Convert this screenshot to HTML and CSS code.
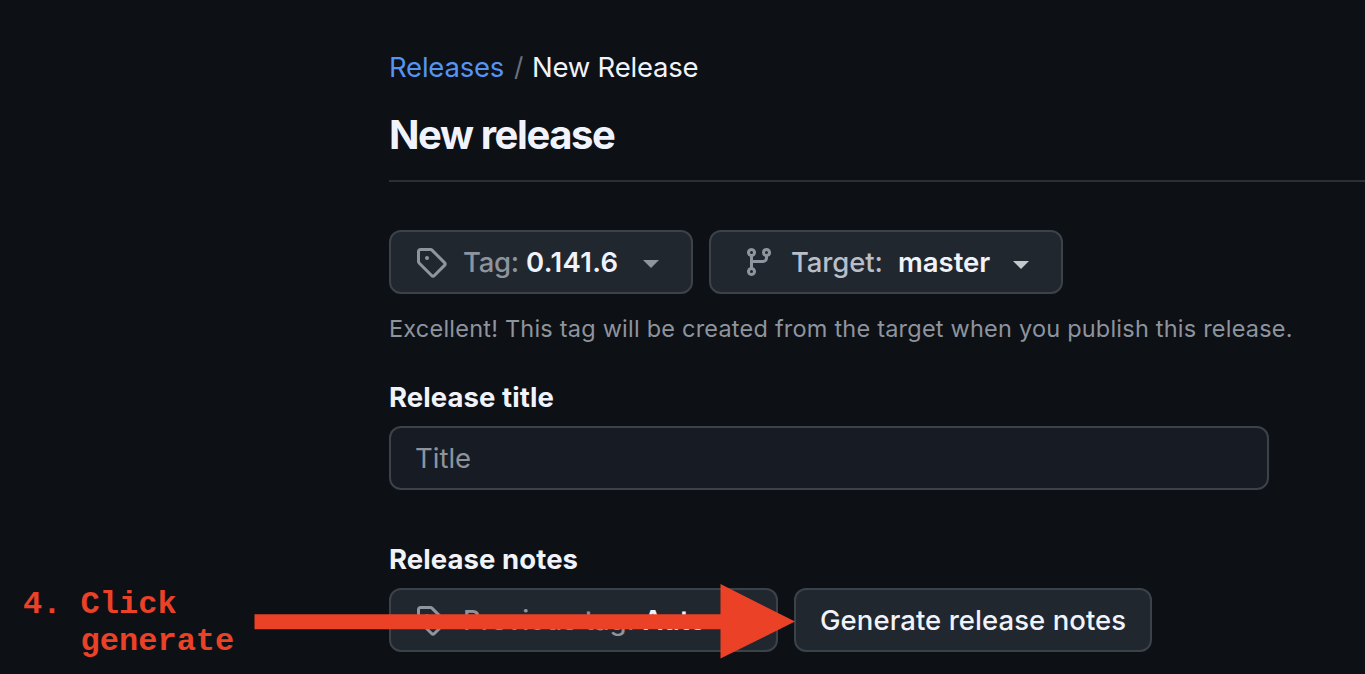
FILE: index.html
```html
<!DOCTYPE html>
<html lang="en">
<head>
<meta charset="utf-8">
<title>New Release</title>
<link rel="stylesheet" href="styles.css">
</head>
<body>
<svg class="symbols" aria-hidden="true">
  <symbol id="tag" viewBox="0 0 16 16"><path d="M1 7.775V2.75C1 1.784 1.784 1 2.75 1h5.025c.464 0 .91.184 1.238.513l6.25 6.25a1.75 1.75 0 0 1 0 2.474l-5.026 5.026a1.75 1.75 0 0 1-2.474 0l-6.25-6.25A1.752 1.752 0 0 1 1 7.775Zm1.5 0c0 .066.026.13.073.177l6.25 6.25a.25.25 0 0 0 .354 0l5.025-5.025a.25.25 0 0 0 0-.354l-6.25-6.25a.25.25 0 0 0-.177-.073H2.75a.25.25 0 0 0-.25.25ZM6 5a1 1 0 1 1 0 2 1 1 0 0 1 0-2Z"/></symbol>
  <symbol id="branch" viewBox="0 0 16 16"><path fill-rule="evenodd" d="M11.75 2.5a.75.75 0 1 0 0 1.5.75.75 0 0 0 0-1.5Zm-2.25.75a2.25 2.25 0 1 1 3 2.122V6A2.5 2.5 0 0 1 10 8.5H5v2.128a2.251 2.251 0 1 1-1.5 0V5.372a2.25 2.25 0 1 1 1.5 0V7h5a1 1 0 0 0 1-1v-.628A2.25 2.25 0 0 1 9.5 3.25ZM4.25 12a.75.75 0 1 0 0 1.5.75.75 0 0 0 0-1.5ZM3.5 3.25a.75.75 0 1 0 1.5 0 .75.75 0 0 0-1.5 0Z"/></symbol>
</svg>
<main class="page">
  <nav class="breadcrumb"><a class="crumb-link" href="#">Releases</a><span class="slash">/</span><span class="crumb-current">New Release</span></nav>
  <h1 class="title">New release</h1>
  <div class="row">
    <button class="btn tag-btn"><svg class="icon"><use href="#tag"/></svg><span class="muted tag-label">Tag:</span><span class="tag-value">0.141.6</span><i class="caret"></i></button>
    <button class="btn target-btn"><svg class="icon"><use href="#branch"/></svg><span class="soft target-label">Target:</span><span class="target-value">master</span><i class="caret light"></i></button>
  </div>
  <p class="hint">Excellent! This tag will be created from the target when you publish this release.</p>
  <label class="label label-title" for="release-title">Release title</label>
  <input class="field" id="release-title" placeholder="Title">
  <div class="label label-notes">Release notes</div>
  <div class="row">
    <button class="btn previous-btn"><svg class="icon"><use href="#tag"/></svg><span class="muted previous-label">Previous tag:</span><span class="previous-value">Auto</span><i class="caret"></i></button>
    <button class="btn generate-btn">Generate release notes</button>
  </div>
</main>
<div class="note">4. Click
   generate</div>
<svg class="arrow" viewBox="0 0 541 76"><path d="M.5 30.3H466.5V0L541 37.5L466.5 74.5V45.3H.5Z"/></svg>
</body>
</html>
```

FILE: styles.css
```css
* { box-sizing: border-box; }
body { margin: 0; height: 674px; overflow: hidden; position: relative; background: #0d1015; color: #f0f3fb; font: 27.5px/32px Inter, "Liberation Sans", sans-serif; }
.symbols { display: none; }
.page { padding: 46px 0 0 389px; }
.breadcrumb { display: flex; line-height: 42px; height: 42px; letter-spacing: -0.22px; }
.crumb-link { color: #5494f3; text-decoration: none; width: 125px; }
.slash { color: #6a717b; width: 18px; font-size: 26px; }
.title { margin: 23px 0 0; height: 71px; border-bottom: 2px solid #2b3037; font-size: 40px; line-height: 48px; font-weight: 650; letter-spacing: -1.4px; }
.row { display: flex; gap: 16px; }
.title + .row { margin-top: 48px; }
.btn { display: flex; align-items: center; height: 64px; padding: 0 0 0 24px; border: 2px solid #3c4249; border-radius: 12px; background: #21272e; color: #f0f3fb; font: 500 27.5px/32px Inter, "Liberation Sans", sans-serif; text-align: left; white-space: nowrap; }
.icon { width: 32px; height: 32px; margin-right: 16px; fill: #8d959e; flex: none; }
.muted { color: #8d949e; }
.soft { color: #b9bec8; }
.tag-btn { width: 304px; }
.target-btn { width: 354px; padding-left: 32px; }
.previous-btn { width: 389px; }
.generate-btn { width: 358px; letter-spacing: 0.06px; }
.tag-label { width: 63px; letter-spacing: -0.3px; }
.tag-value { width: 117px; font-weight: 600; letter-spacing: 0.35px; }
.target-label { width: 107px; letter-spacing: -0.1px; }
.target-value { width: 115px; font-weight: 600; }
.previous-label { width: 180px; }
.previous-value { width: 86px; font-weight: 600; }
.caret { border: 8px solid transparent; border-top-color: #8d959e; border-bottom: 0; margin-top: 3px; }
.caret.light { border-top-color: #c3c8cc; margin-top: 5px; }
.hint { margin: 17px 0 0; line-height: 36px; font-size: 23.5px; letter-spacing: 0.215px; color: #8d949e; white-space: nowrap; }
.label { display: block; height: 32px; font-weight: 650; letter-spacing: 0.08px; }
.label-title { margin-top: 34px; }
.label-notes { margin: 53px 0 13px; }
.field { display: block; width: 880px; height: 64px; margin-top: 13px; padding: 0 24px; border: 2px solid #3c4249; border-radius: 12px; background: #171b23; font: inherit; color: #f0f3fb; }
.field::placeholder { color: #8d949e; opacity: 1; }
.note { position: absolute; left: 23px; top: 586px; color: #eb4127; font: bold 32px/37px "Liberation Mono", monospace; white-space: pre; }
.arrow { position: absolute; left: 254px; top: 584px; width: 541px; height: 76px; fill: #eb4127; }
```
